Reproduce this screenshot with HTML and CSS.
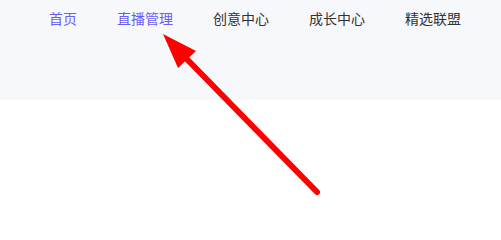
FILE: index.html
```html
<!DOCTYPE html>
<html lang="zh">
<head>
<meta charset="utf-8">
<link rel="stylesheet" href="styles.css">
</head>
<body>
<header class="header">
  <nav class="nav">
    <a class="nav-item active">首页</a>
    <a class="nav-item active">直播管理</a>
    <a class="nav-item">创意中心</a>
    <a class="nav-item">成长中心</a>
    <a class="nav-item">精选联盟</a>
  </nav>
</header>
<svg class="arrow" width="501" height="215" viewBox="0 0 501 215">
  <line x1="317" y1="192" x2="176" y2="48" stroke="#ff0000" stroke-width="6" stroke-linecap="round"/>
  <polygon points="163,34 196,51 178,68" fill="#ff0000"/>
</svg>
</body>
</html>
```
FILE: styles.css
```css
html, body {
  margin: 0;
  padding: 0;
  background: #ffffff;
  width: 501px;
  height: 215px;
  overflow: hidden;
  position: relative;
}
.header {
  height: 100px;
  background: #f7f8fc;
}
.nav {
  display: flex;
  gap: 40px;
  padding: 8px 0 0 49px;
  font-family: "Noto Sans CJK SC", "Noto Sans", sans-serif;
  font-size: 14px;
  line-height: 20px;
}
.nav-item {
  color: #333333;
  text-decoration: none;
}
.nav-item.active {
  color: #6b5cf5;
}
.arrow {
  position: absolute;
  left: 0;
  top: 0;
}
```
